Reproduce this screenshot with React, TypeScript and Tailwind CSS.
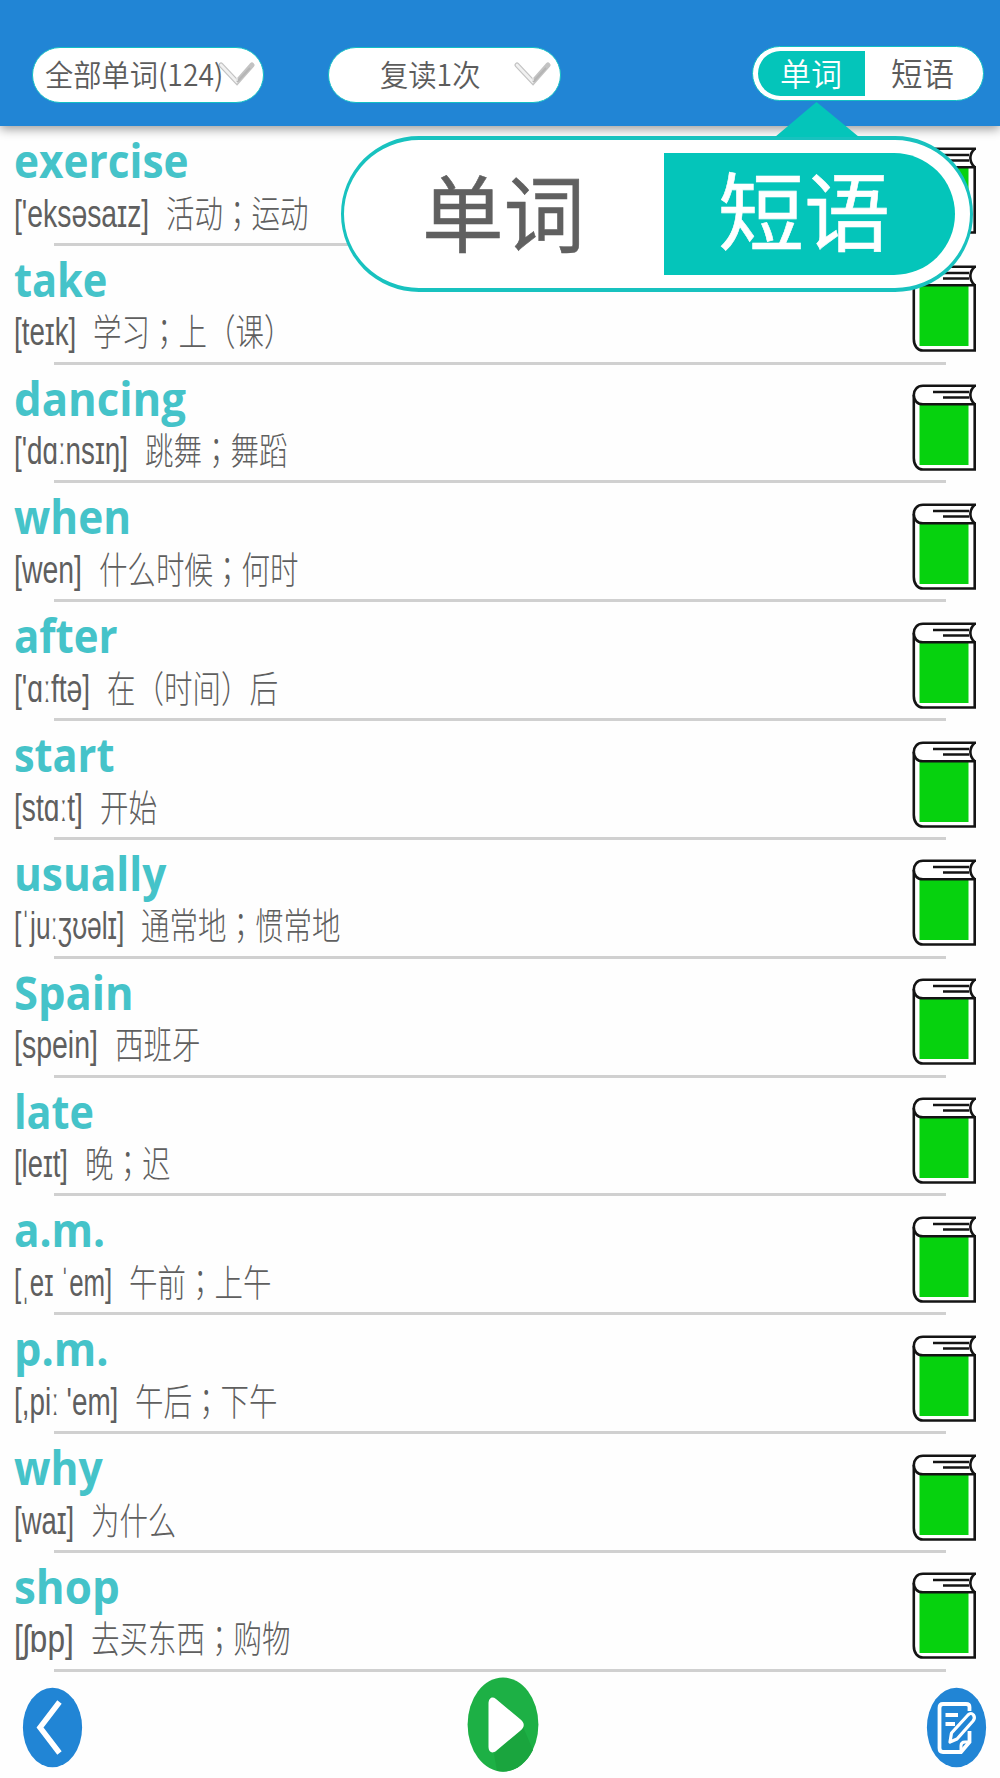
import { ReactNode, useLayoutEffect, useRef, useState } from 'react'

interface Entry {
  word: string
  wordWidth: number
  phonetic: string
  phoneticWidth: number
  meaning: string
}

const entries: Entry[] = [
  { word: 'exercise', wordWidth: 175, phonetic: "['eksəsaɪz]", phoneticWidth: 135, meaning: '活动；运动' },
  { word: 'take', wordWidth: 93, phonetic: '[teɪk]', phoneticWidth: 62, meaning: '学习；上（课）' },
  { word: 'dancing', wordWidth: 172, phonetic: "['dɑːnsɪŋ]", phoneticWidth: 114, meaning: '跳舞；舞蹈' },
  { word: 'when', wordWidth: 117, phonetic: '[wen]', phoneticWidth: 68, meaning: '什么时候；何时' },
  { word: 'after', wordWidth: 104, phonetic: "['ɑːftə]", phoneticWidth: 76, meaning: '在（时间）后' },
  { word: 'start', wordWidth: 100, phonetic: '[stɑːt]', phoneticWidth: 69, meaning: '开始' },
  { word: 'usually', wordWidth: 152, phonetic: '[ˈjuːʒʊəlɪ]', phoneticWidth: 110, meaning: '通常地；惯常地' },
  { word: 'Spain', wordWidth: 120, phonetic: '[spein]', phoneticWidth: 84, meaning: '西班牙' },
  { word: 'late', wordWidth: 80, phonetic: '[leɪt]', phoneticWidth: 54, meaning: '晚；迟' },
  { word: 'a.m.', wordWidth: 91, phonetic: '[ˌeɪ ˈem]', phoneticWidth: 98, meaning: '午前；上午' },
  { word: 'p.m.', wordWidth: 95, phonetic: "[,piː 'em]", phoneticWidth: 104, meaning: '午后；下午' },
  { word: 'why', wordWidth: 89, phonetic: '[waɪ]', phoneticWidth: 60, meaning: '为什么' },
  { word: 'shop', wordWidth: 106, phonetic: '[ʃɒp]', phoneticWidth: 60, meaning: '去买东西；购物' },
]

// Squeezes or stretches one line of text horizontally to the given width
function FitText({ width, className, children }: { width: number; className?: string; children: ReactNode }) {
  const ref = useRef<HTMLSpanElement>(null)
  const [scale, setScale] = useState(1)

  useLayoutEffect(() => {
    if (ref.current) setScale(width / ref.current.offsetWidth)
  }, [width, children])

  return (
    <span className="block shrink-0" style={{ width }}>
      <span
        ref={ref}
        className={`inline-block origin-left whitespace-nowrap ${className ?? ''}`}
        style={{ transform: `scaleX(${scale})` }}
      >
        {children}
      </span>
    </span>
  )
}

function CheckArrow() {
  return (
    <svg width="38" height="26" viewBox="0 0 38 26" fill="none">
      <path d="M3 3L19 20L34 3" stroke="#c3c3c3" strokeWidth="5" strokeLinecap="round" />
      <path d="M3 3L19 20" stroke="#f1f1f1" strokeWidth="2.6" strokeLinecap="round" />
      <path d="M19 20L32 6" stroke="#b5b5b5" strokeWidth="2" />
      <path d="M19 16L19 19" stroke="#e4e4e4" strokeWidth="1.5" />
    </svg>
  )
}

function BookIcon() {
  return (
    <svg width="65" height="88" viewBox="0 0 65 88" fill="none" stroke="#141414" strokeWidth="2.6">
      <path d="M1.8 11V74C1.8 81 5.5 85.5 11 85.5H62.7V20" fill="#fff" />
      <rect x="7.5" y="21" width="49" height="60" fill="#06d20e" stroke="none" />
      <path d="M64 1.8H11C5 1.8 1.8 6 1.8 11C1.8 16 5 20.3 11 20.3H64" fill="#fff" />
      <path d="M62.5 2C57 7 57 15 62.5 20" />
      <path d="M21 8H57M31 13.5H57" strokeWidth="2.6" />
    </svg>
  )
}

function WordRow({ entry }: { entry: Entry }) {
  return (
    <li className="flex h-[118.83px] flex-col">
      <div className="flex flex-1 justify-between pl-[13.5px] pr-[23.5px]">
        <div>
          <FitText
            width={entry.wordWidth}
            className="pt-[2px] font-['Open_Sans'] text-[46px] leading-[62px] font-bold text-[#45c3c9]"
          >
            {entry.word}
          </FitText>
          <div className="flex h-[45px] items-center gap-[17px] text-[#5f5f5f]">
            <FitText
              width={entry.phoneticWidth}
              className="font-['Liberation_Sans',sans-serif] text-[38px] leading-[44px]"
            >
              {entry.phonetic}
            </FitText>
            <span className="origin-left scale-x-[0.77] pb-[4px] font-['Noto_Sans_CJK_JP',sans-serif] text-[37px] leading-[44px] font-light whitespace-nowrap">
              {entry.meaning}
            </span>
          </div>
        </div>
        <div className="pt-[19.5px]">
          <BookIcon />
        </div>
      </div>
      <div className="mr-[54px] ml-[54px] h-[3px] shrink-0 bg-[#d0d0d0]" />
    </li>
  )
}

function Header() {
  return (
    <header className="relative flex h-[125.5px] shrink-0 items-start bg-[#2185d5] pt-[46px] pl-[31.5px] text-[#5c5c5c] shadow-[0_3px_10px_rgba(0,0,0,0.4)]">
      <button className="mt-px flex h-[56px] w-[232px] items-center rounded-full border border-[#13bfc4] bg-white pl-[12px]">
        <FitText width={178} className="pb-[4px] font-['Noto_Sans_CJK_SC',sans-serif] text-[30px] leading-[50px] font-[350]">
          全部单词(124)
        </FitText>
        <span className="-ml-[5px]">
          <CheckArrow />
        </span>
      </button>
      <button className="mt-px ml-[64.5px] flex h-[56px] w-[233px] items-center rounded-full border border-[#13bfc4] bg-white pl-[51px]">
        <FitText width={100} className="pb-[4px] font-['Noto_Sans_CJK_SC',sans-serif] text-[30px] leading-[50px] font-[350]">
          复读1次
        </FitText>
        <span className="ml-[34px]">
          <CheckArrow />
        </span>
      </button>
      <div className="ml-[190.5px] flex h-[55px] w-[232px] items-center rounded-full border border-[#13bfc4] bg-white pl-[5px] font-['Noto_Sans_CJK_SC',sans-serif] text-[32px] leading-[44px] font-[350]">
        <button className="flex h-[45px] w-[107px] items-center rounded-l-full bg-[#04c5ba] pl-[22px] text-white">
          <FitText width={62} className="pb-[3px]">
            单词
          </FitText>
        </button>
        <button className="pl-[26px]">
          <FitText width={63} className="pb-[3px]">
            短语
          </FitText>
        </button>
      </div>
    </header>
  )
}

function PhraseCallout() {
  return (
    <div className="absolute top-[102px] left-[341px] w-[632px] font-['Noto_Sans_CJK_SC',sans-serif]">
      <svg className="ml-[434px] block" width="84" height="35" viewBox="0 0 84 35">
        <path d="M41.5 0L84 35H0Z" fill="#04c5ba" />
      </svg>
      <div className="-mt-px flex h-[156px] items-center rounded-full border-x-3 border-y-4 border-[#18c2bf] bg-white pr-[15px]">
        <div className="flex w-[320px] pl-[78px] text-[#606060]">
          <FitText width={163} className="pb-[8px] text-[84px] leading-[112px] [-webkit-text-stroke:0.6px_#606060]">
            单词
          </FitText>
        </div>
        <div className="flex h-[122px] flex-1 items-center rounded-r-full bg-[#04c5ba] pl-[54px] text-white">
          <FitText width={172} className="pb-[12px] text-[86px] leading-[110px] [-webkit-text-stroke:0.6px_#fff]">
            短语
          </FitText>
        </div>
      </div>
    </div>
  )
}

function BottomBar() {
  return (
    <footer className="flex flex-1 items-start justify-between pt-[5.5px] pr-[13px] pl-[22px]">
      <button className="mt-[9.5px]">
        <svg width="61" height="81" viewBox="0 0 61 81" fill="none">
          <ellipse cx="30.5" cy="40.5" rx="29.6" ry="39.8" fill="#2185d5" />
          <path d="M37.5 15L18 40.5L37.5 66" stroke="#fff" strokeWidth="5.5" />
        </svg>
      </button>
      <button className="ml-[-3px]">
        <svg width="72" height="95" viewBox="0 0 72 95">
          <ellipse cx="36" cy="47.5" rx="35.4" ry="47" fill="#1db045" />
          <path d="M27 77L56 50L66 73C57 91 42 97 30 94Z" fill="#1aa53e" />
          <path d="M21.5 27C21.5 21 25 19 29 22L53 42C58 46 58 50 53 54L29 74C25 77 21.5 75 21.5 70Z" fill="#fff" />
        </svg>
      </button>
      <button className="mt-[9.5px]">
        <svg width="61" height="81" viewBox="0 0 61 81" fill="none" stroke="#fff" strokeWidth="3.8">
          <ellipse cx="30.5" cy="40.5" rx="29.6" ry="39.8" fill="#2185d5" stroke="none" />
          <path d="M43.5 24V20Q43.5 17 40 17H17Q13.5 17 13.5 21V61Q13.5 65 17 65H35L43.5 55V44" />
          <path d="M35 65V59Q35 55 39 55H43" strokeWidth="3" />
          <path d="M19.5 28H32M19.5 37H29" />
          <path d="M24 55L25.5 46L42 28Q45 25 47.5 28Q49.5 31 47 34L31 52Z" strokeWidth="3.2" strokeLinejoin="round" />
        </svg>
      </button>
    </footer>
  )
}

export default function App() {
  return (
    <div className="relative flex h-[1778px] w-[1000px] flex-col overflow-hidden bg-[#fefefe]">
      <Header />
      <ul className="mt-[1.5px] shrink-0">
        {entries.map((entry) => (
          <WordRow key={entry.word} entry={entry} />
        ))}
      </ul>
      <BottomBar />
      <PhraseCallout />
    </div>
  )
}
